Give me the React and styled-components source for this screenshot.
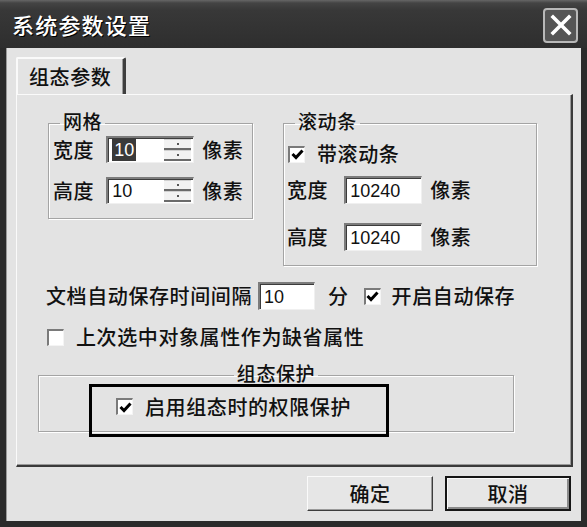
import React from "react";
import styled, { createGlobalStyle } from "styled-components";

const GlobalStyle = createGlobalStyle`
  html, body { margin: 0; padding: 0; background: #ffffff; }
  body { font-family: "Noto Sans CJK SC", "Liberation Sans", sans-serif; color: #111; }
  * { box-sizing: border-box; }
`;

const Window = styled.div`
  width: 587px;
  height: 527px;
  display: flex;
  flex-direction: column;
  background: #2b2b2b;
`;

const TitleBar = styled.div`
  height: 48px;
  flex: none;
  display: flex;
  align-items: center;
  justify-content: space-between;
  padding: 0 9px 0 12px;
  background: linear-gradient(#666 0px, #444 3px, #383838 10px, #2e2e2e 100%);
`;

const TitleText = styled.div`
  color: #fff;
  font-size: 22px;
  font-weight: 500;
  letter-spacing: 1.2px;
  text-shadow: 1px 1px 0 #000;
`;

const CloseButton = styled.div`
  width: 35px;
  height: 35px;
  margin-top: 2px;
  border: 2px solid #b8b8b8;
  border-radius: 4px;
  background: #555;
  display: flex;
  align-items: center;
  justify-content: center;
`;

const Frame = styled.div`
  flex: 1;
  display: flex;
  padding: 0 6px 7px 6px;
`;

const Client = styled.div`
  flex: 1;
  display: flex;
  flex-direction: column;
  background: #e3e3e3;
  padding: 9px 8px 10px 9px;
  border-left: 1px solid #9a9a9a;
`;

const TabStrip = styled.div`
  display: flex;
  height: 37px;
`;

const Tab = styled.div`
  position: relative;
  z-index: 1;
  width: 110px;
  height: 37px;
  margin-bottom: -1px;
  background: #e3e3e3;
  border-style: solid;
  border-width: 2px 3px 0 2px;
  border-color: #fafafa #3e3e3e #e3e3e3 #fafafa;
  box-shadow: inset -1px 0 0 #9a9a9a;
  border-radius: 2px 2px 0 0;
  padding-left: 11px;
  display: flex;
  align-items: center;
  font-size: 20px;
  font-weight: 500;
  letter-spacing: 0.6px;
`;

const Page = styled.div`
  height: 373px;
  display: flex;
  flex-direction: column;
  border-style: solid;
  border-width: 1px 2px 2px 1px;
  border-color: #fafafa #3a3a3a #3a3a3a #fafafa;
  box-shadow: inset -1px -1px 0 #9a9a9a;
`;

const TopRow = styled.div`
  display: flex;
  align-items: flex-start;
  gap: 30px;
  margin: 16px 0 0 31px;
`;

const Group = styled.fieldset`
  margin: 0;
  padding: 0;
  width: ${(p) => p.$w}px;
  min-width: 0;
  flex: none;
  border: 1px solid #a4a4a4;
  box-shadow: 1px 1px 0 #fff, inset 1px 1px 0 #fff;
  margin-left: ${(p) => p.$ml || 0}px;
  margin-top: ${(p) => p.$mt || 0}px;
`;

const Legend = styled.legend`
  font-size: 19px;
  font-weight: 500;
  line-height: 19px;
  letter-spacing: 0.6px;
  padding: 0 3px 6px;
  margin-left: ${(p) => (p.$center ? "auto" : "11px")};
  margin-right: ${(p) => (p.$center ? "auto" : "0")};
`;

const GroupBody = styled.div`
  display: flex;
  flex-direction: column;
  gap: ${(p) => p.$gap || 0}px;
  padding: ${(p) => p.$pad || 0};
  height: ${(p) => (p.$h ? `${p.$h}px` : "auto")};
`;

const Row = styled.div`
  display: flex;
  align-items: center;
  flex: none;
  height: ${(p) => p.$h}px;
  margin-top: ${(p) => p.$mt || 0}px;
  margin-left: ${(p) => p.$ml || 0}px;
  white-space: nowrap;
`;

const Label = styled.span`
  margin-left: ${(p) => p.$ml || 0}px;
  font-size: 20px;
  font-weight: 500;
  line-height: 22px;
  letter-spacing: 0.6px;
`;

const Field = styled.div`
  width: ${(p) => p.$w}px;
  height: ${(p) => p.$h}px;
  margin-left: ${(p) => p.$ml || 0}px;
  flex: none;
  display: flex;
  align-items: center;
  background: #fff;
  border-style: solid;
  border-width: 2px 1px 1px 2px;
  border-color: #7c7c7c #f0f0f0 #f0f0f0 #7c7c7c;
  box-shadow: inset 1px 1px 0 #3c3c3c;
  padding-left: 4px;
  font-family: "Liberation Sans", Arial, sans-serif;
  font-size: 18px;
  letter-spacing: 0;
`;

const FieldText = styled.span`
  flex: 1;
  line-height: 22px;
`;

const Selected = styled.span`
  background: #3a3a3a;
  color: #fff;
  padding: 1px 2px;
`;

const Spin = styled.div`
  width: 27px;
  height: 100%;
  margin-right: 2px;
  display: flex;
  flex-direction: column;
  padding: 1px 0;
`;

const SpinButton = styled.div`
  flex: 1;
  background: #f2f2f2;
  border-top: 1px solid #d0d0d0;
  border-bottom: 2px solid #6a6a6a;
  display: flex;
  align-items: center;
  justify-content: center;
`;

const SpinDot = styled.span`
  width: 2px;
  height: 2px;
  background: #555;
`;

const Box = styled.span`
  width: 17px;
  height: 17px;
  flex: none;
  margin-left: ${(p) => p.$ml || 0}px;
  background: #fff;
  border-style: solid;
  border-width: 2px 1px 1px 2px;
  border-color: #7a7a7a #f4f4f4 #f4f4f4 #7a7a7a;
  display: flex;
  align-items: center;
  justify-content: center;
`;

const Highlight = styled.div`
  flex: none;
  width: 300px;
  height: 53px;
  margin: -4px 0 0 50px;
  border: 3px solid #000;
  padding: 11px 0 0 24px;
`;

const ButtonRow = styled.div`
  display: flex;
  justify-content: flex-end;
  gap: 12px;
  margin-top: 9px;
  padding-right: 2px;
`;

const Button = styled.div`
  width: 126px;
  height: 35px;
  display: flex;
  align-items: center;
  justify-content: center;
  font-size: 20px;
  font-weight: 500;
  letter-spacing: 0.5px;
  background: #e6e6e6;
  border-style: solid;
  border-width: ${(p) => (p.$default ? "2px" : "1px")};
  border-color: ${(p) =>
    p.$default ? "#151515" : "#fafafa #3c3c3c #3c3c3c #fafafa"};
  box-shadow: ${(p) =>
    p.$default
      ? "inset 1px 1px 0 #fafafa, inset -2px -2px 0 #8a8a8a"
      : "inset -1px -1px 0 #9a9a9a"};
`;

function Check({ checked, ml }) {
  return (
    <Box $ml={ml}>
      {checked && (
        <svg width="13" height="13" viewBox="0 0 13 13">
          <path d="M1.5 6 L5 9.5 L11.5 2.5" stroke="#000" strokeWidth="3" fill="none" />
        </svg>
      )}
    </Box>
  );
}

function SpinField({ value, selected }) {
  return (
    <Field $w={88} $h={27} $ml={12}>
      <FieldText>{selected ? <Selected>{value}</Selected> : value}</FieldText>
      <Spin>
        <SpinButton>
          <SpinDot />
        </SpinButton>
        <SpinButton>
          <SpinDot />
        </SpinButton>
      </Spin>
    </Field>
  );
}

export default function App() {
  return (
    <>
      <GlobalStyle />
      <Window>
        <TitleBar>
          <TitleText>系统参数设置</TitleText>
          <CloseButton>
            <svg width="22" height="22" viewBox="0 0 22 22">
              <path d="M3 3 L19 19 M19 3 L3 19" stroke="#fff" strokeWidth="3.6" strokeLinecap="square" />
            </svg>
          </CloseButton>
        </TitleBar>
        <Frame>
          <Client>
            <TabStrip>
              <Tab>组态参数</Tab>
            </TabStrip>
            <Page>
              <TopRow>
                <Group $w={205}>
                  <Legend>网格</Legend>
                  <GroupBody $gap={14} $pad="0 0 14px 4px">
                    <Row $h={27}>
                      <Label>宽度</Label>
                      <SpinField value="10" selected />
                      <Label $ml={8}>像素</Label>
                    </Row>
                    <Row $h={27}>
                      <Label>高度</Label>
                      <SpinField value="10" />
                      <Label $ml={8}>像素</Label>
                    </Row>
                  </GroupBody>
                </Group>
                <Group $w={254}>
                  <Legend>滚动条</Legend>
                  <GroupBody $pad="5px 0 14px 3px">
                    <Row $h={26}>
                      <Check checked ml={1} />
                      <Label $ml={12}>带滚动条</Label>
                    </Row>
                    <Row $h={28} $mt={9}>
                      <Label>宽度</Label>
                      <Field $w={78} $h={28} $ml={16}>
                        <FieldText>10240</FieldText>
                      </Field>
                      <Label $ml={8}>像素</Label>
                    </Row>
                    <Row $h={28} $mt={19}>
                      <Label>高度</Label>
                      <Field $w={78} $h={28} $ml={16}>
                        <FieldText>10240</FieldText>
                      </Field>
                      <Label $ml={8}>像素</Label>
                    </Row>
                  </GroupBody>
                </Group>
              </TopRow>
              <Row $h={28} $mt={16} $ml={29}>
                <Label>文档自动保存时间间隔</Label>
                <Field $w={57} $h={28} $ml={6}>
                  <FieldText>10</FieldText>
                </Field>
                <Label $ml={13}>分</Label>
                <Check checked ml={15} />
                <Label $ml={11}>开启自动保存</Label>
              </Row>
              <Row $h={26} $mt={14} $ml={30}>
                <Check />
                <Label $ml={12}>上次选中对象属性作为缺省属性</Label>
              </Row>
              <Group $w={476} $ml={21} $mt={13}>
                <Legend $center>组态保护</Legend>
                <GroupBody $h={43}>
                  <Highlight>
                    <Row $h={17}>
                      <Check checked />
                      <Label $ml={12}>启用组态时的权限保护</Label>
                    </Row>
                  </Highlight>
                </GroupBody>
              </Group>
            </Page>
            <ButtonRow>
              <Button>确定</Button>
              <Button $default>取消</Button>
            </ButtonRow>
          </Client>
        </Frame>
      </Window>
    </>
  );
}
